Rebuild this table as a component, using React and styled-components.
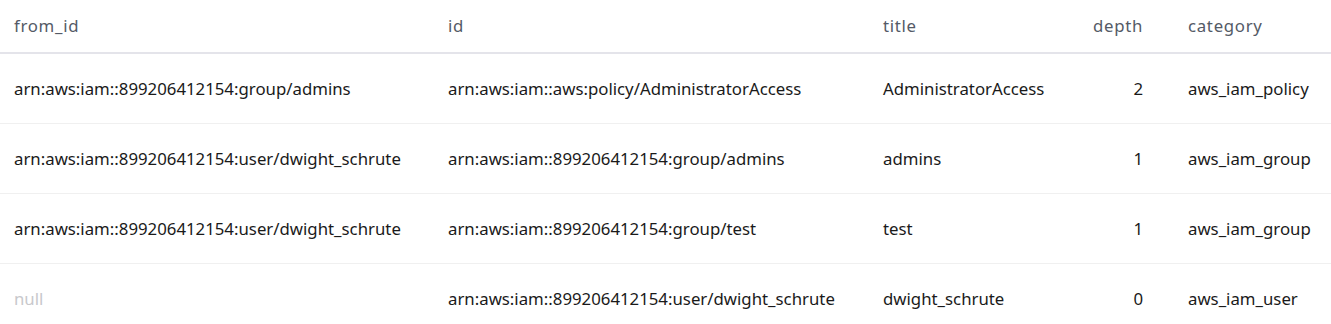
import React from 'react'
import styled, { createGlobalStyle } from 'styled-components'

const GlobalStyle = createGlobalStyle`
  body {
    margin: 0;
    background: #ffffff;
    font-family: 'Noto Sans', 'Open Sans', sans-serif;
  }
`

const columns = [
  { key: 'from_id', label: 'from_id', width: 434 },
  { key: 'id', label: 'id', width: 435 },
  { key: 'title', label: 'title', width: 206 },
  { key: 'depth', label: 'depth', width: 82, align: 'right' },
  { key: 'category', label: 'category', width: 174, padLeft: 31 },
]

const rows = [
  {
    from_id: 'arn:aws:iam::899206412154:group/admins',
    id: 'arn:aws:iam::aws:policy/AdministratorAccess',
    title: 'AdministratorAccess',
    depth: 2,
    category: 'aws_iam_policy',
  },
  {
    from_id: 'arn:aws:iam::899206412154:user/dwight_schrute',
    id: 'arn:aws:iam::899206412154:group/admins',
    title: 'admins',
    depth: 1,
    category: 'aws_iam_group',
  },
  {
    from_id: 'arn:aws:iam::899206412154:user/dwight_schrute',
    id: 'arn:aws:iam::899206412154:group/test',
    title: 'test',
    depth: 1,
    category: 'aws_iam_group',
  },
  {
    from_id: null,
    id: 'arn:aws:iam::899206412154:user/dwight_schrute',
    title: 'dwight_schrute',
    depth: 0,
    category: 'aws_iam_user',
  },
]

const App = () => {
  return (
    <>
      <GlobalStyle />
      <Table>
        <colgroup>
          {columns.map((c) => (
            <col key={c.key} style={{ width: c.width }} />
          ))}
        </colgroup>
        <thead>
          <HeadRow>
            {columns.map((c) => (
              <HeadCell key={c.key} $align={c.align} $padLeft={c.padLeft}>
                {c.label}
              </HeadCell>
            ))}
          </HeadRow>
        </thead>
        <tbody>
          {rows.map((row, i) => (
            <BodyRow key={i}>
              {columns.map((c) => {
                const value = row[c.key]
                const isNull = value === null
                return (
                  <Cell key={c.key} $align={c.align} $padLeft={c.padLeft} $muted={isNull}>
                    {isNull ? 'null' : value}
                  </Cell>
                )
              })}
            </BodyRow>
          ))}
        </tbody>
      </Table>
    </>
  )
}

const Table = styled.table`
  width: 1331px;
  border-collapse: collapse;
  table-layout: fixed;
`

const HeadRow = styled.tr`
  height: 53px;
  border-bottom: 2px solid #e4e4ea;
`

const HeadCell = styled.th`
  padding: 0 14px 2px ${({ $padLeft }) => ($padLeft ? `${$padLeft}px` : '14px')};
  text-align: ${({ $align }) => $align || 'left'};
  font-weight: 400;
  font-size: 16.8px;
  letter-spacing: 0.7px;
  color: #545a66;
  white-space: nowrap;
`

const BodyRow = styled.tr`
  height: 70px;
  border-bottom: 1px solid #f0f0f0;
`

const Cell = styled.td`
  padding: 0 14px 0 ${({ $padLeft }) => ($padLeft ? `${$padLeft}px` : '14px')};
  text-align: ${({ $align }) => $align || 'left'};
  font-size: 16.8px;
  color: ${({ $muted }) => ($muted ? '#c8c8cc' : '#1a1a1a')};
  white-space: nowrap;
`

export default App
